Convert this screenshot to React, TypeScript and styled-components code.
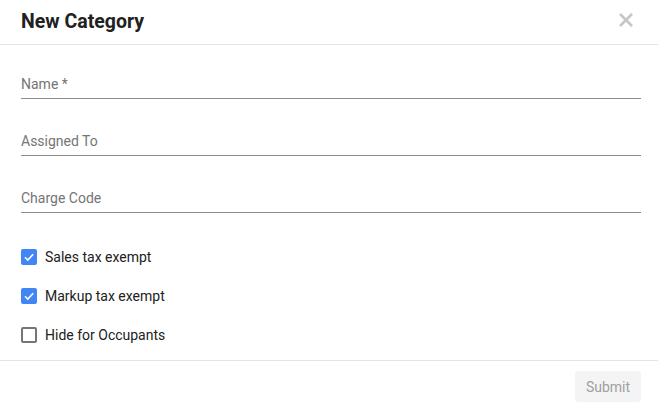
import styled, { createGlobalStyle } from 'styled-components';

const GlobalStyle = createGlobalStyle`
    body {
        margin: 0;
        background: #ffffff;
        font-family: Roboto, "Liberation Sans", sans-serif;
    }
`;

const Dialog = styled.div`
    width: 658px;
    height: 403px;
    background: #ffffff;
    display: flex;
    flex-direction: column;
`;

const Header = styled.div`
    height: 44px;
    padding: 0 24px 0 21px;
    display: flex;
    align-items: center;
    justify-content: space-between;
    border-bottom: 1px solid #e3e3e3;
`;

const Title = styled.h2`
    margin: 0 0 2px;
    font-size: 19.5px;
    font-weight: 700;
    color: #212121;
`;

const Close = styled.button`
    border: none;
    background: none;
    padding: 0;
    width: 16px;
    height: 16px;
    margin-bottom: 4px;
    display: flex;
    align-items: center;
    justify-content: center;
    cursor: pointer;
`;

const Body = styled.div`
    padding: 29px 17px 6px 21px;
    border-bottom: 1px solid #e3e3e3;
`;

const Field = styled.div`
    padding-bottom: 4px;
    border-bottom: 1px solid #8c8c8c;
    margin-bottom: 32px;

    &:last-of-type {
        margin-bottom: 24px;
    }
`;

const Label = styled.div`
    font-size: 14px;
    line-height: 20px;
    color: #757575;
`;

const CheckRow = styled.label`
    height: 39px;
    display: flex;
    align-items: center;
    gap: 8px;
    font-size: 14px;
    color: #212121;
    cursor: pointer;
`;

const Box = styled.span<{ $checked: boolean }>`
    width: 16px;
    height: 16px;
    box-sizing: border-box;
    border-radius: 2px;
    display: flex;
    align-items: center;
    justify-content: center;
    background: ${(p) => (p.$checked ? '#4285f4' : '#ffffff')};
    border: ${(p) => (p.$checked ? 'none' : '2px solid #757575')};
`;

const Footer = styled.div`
    flex: 1;
    display: flex;
    justify-content: flex-end;
    align-items: flex-start;
    padding: 10px 17px 0 0;
`;

const SubmitButton = styled.button`
    height: 31px;
    width: 66px;
    border: none;
    border-radius: 4px;
    background: #f4f4f4;
    color: #a0a0a0;
    font-family: Roboto, "Liberation Sans", sans-serif;
    font-size: 14px;
`;

const checks = [
    { label: 'Sales tax exempt', checked: true },
    { label: 'Markup tax exempt', checked: true },
    { label: 'Hide for Occupants', checked: false },
];

const App = () => {
    return (
        <Dialog>
            <GlobalStyle />
            <Header>
                <Title>New Category</Title>
                <Close aria-label='close'>
                    <svg width='16' height='16' viewBox='0 0 16 16'>
                        <path d='M2 2 L14 14 M14 2 L2 14' stroke='#c6c6c6' strokeWidth='2.6' />
                    </svg>
                </Close>
            </Header>
            <Body>
                <Field>
                    <Label>Name *</Label>
                </Field>
                <Field>
                    <Label>Assigned To</Label>
                </Field>
                <Field>
                    <Label>Charge Code</Label>
                </Field>
                {checks.map((c) => (
                    <CheckRow key={c.label}>
                        <Box $checked={c.checked}>
                            {c.checked && (
                                <svg width='12' height='12' viewBox='0 0 12 12'>
                                    <path d='M2 6.2 L4.8 9 L10.2 3.2' stroke='#ffffff' strokeWidth='1.6' fill='none' />
                                </svg>
                            )}
                        </Box>
                        {c.label}
                    </CheckRow>
                ))}
            </Body>
            <Footer>
                <SubmitButton>Submit</SubmitButton>
            </Footer>
        </Dialog>
    );
};

export default App;
